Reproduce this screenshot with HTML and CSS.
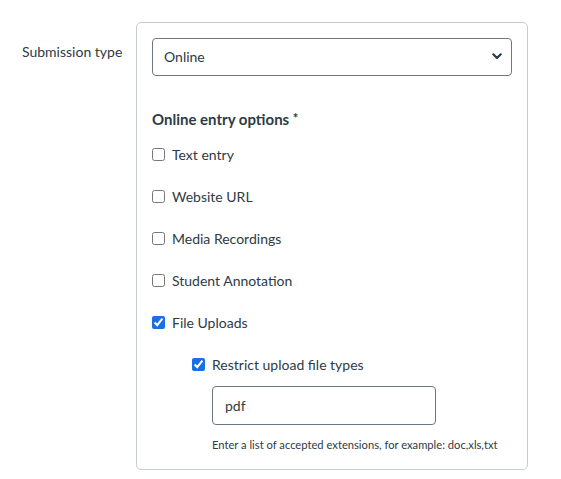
FILE: index.html
```html
<!DOCTYPE html>
<html>
<head>
<meta charset="utf-8">
<link rel="stylesheet" href="styles.css">
</head>
<body>
<div class="row">
  <div class="label">Submission type</div>
  <div class="box">
    <div class="select">
      <span>Online</span>
      <svg class="chev" width="10" height="7" viewBox="0 0 10 7"><path d="M1.3 1.3 L5 5 L8.7 1.3" fill="none" stroke="#2d3b45" stroke-width="2.2" stroke-linecap="round" stroke-linejoin="round"/></svg>
    </div>
    <div class="heading">Online entry options <span class="req">*</span></div>
    <label class="opt"><input type="checkbox"> <span>Text entry</span></label>
    <label class="opt"><input type="checkbox"> <span>Website URL</span></label>
    <label class="opt"><input type="checkbox"> <span>Media Recordings</span></label>
    <label class="opt"><input type="checkbox"> <span>Student Annotation</span></label>
    <label class="opt"><input type="checkbox" checked> <span>File Uploads</span></label>
    <div class="sub">
      <label class="opt"><input type="checkbox" checked> <span>Restrict upload file types</span></label>
      <div class="field">
        <div class="input">pdf</div>
        <div class="hint">Enter a list of accepted extensions, for example: doc,xls,txt</div>
      </div>
    </div>
  </div>
</div>
</body>
</html>
```
FILE: styles.css
```css
html, body { margin: 0; padding: 0; background: #fff; }
body { font-family: Lato, "Noto Sans", sans-serif; color: #2d3b45; font-size: 14px; }
.row { display: flex; padding: 22px 0 0 22px; }
.label { width: 114px; flex: none; padding-top: 21px; font-size: 14px; line-height: 18px; }
.box { width: 360px; border: 1px solid #c7cdd1; border-radius: 5px; padding: 15px 15px 17px 15px; height: 414px; }
.select { box-sizing: border-box; height: 38px; border: 1px solid #6b7780; border-radius: 4px; display: flex; align-items: center; justify-content: space-between; padding: 0 9px 1px 11px; font-size: 14px; line-height: 16px; }
.chev { display: block; }
.heading { font-weight: bold; font-size: 15px; line-height: 18px; height: 18px; margin-top: 34px; }
.req { font-size: 13px; line-height: 0; vertical-align: 2px; }
.opt { display: flex; align-items: center; height: 18px; margin-top: 24px; font-size: 14px; }
.heading + .opt { margin-top: 17px; }
.opt input { margin: 0 7px 0 0; width: 13px; height: 13px; accent-color: #1a6fe3; }
.sub { padding-left: 40px; }
.field { padding-left: 20px; }
.input { margin-top: 13px; width: 210px; height: 37px; border: 1px solid #6b7780; border-radius: 4px; display: flex; align-items: center; padding-left: 12px; font-size: 14px; }
.hint { font-size: 11.2px; margin-top: 13px; line-height: 13px; }
```
